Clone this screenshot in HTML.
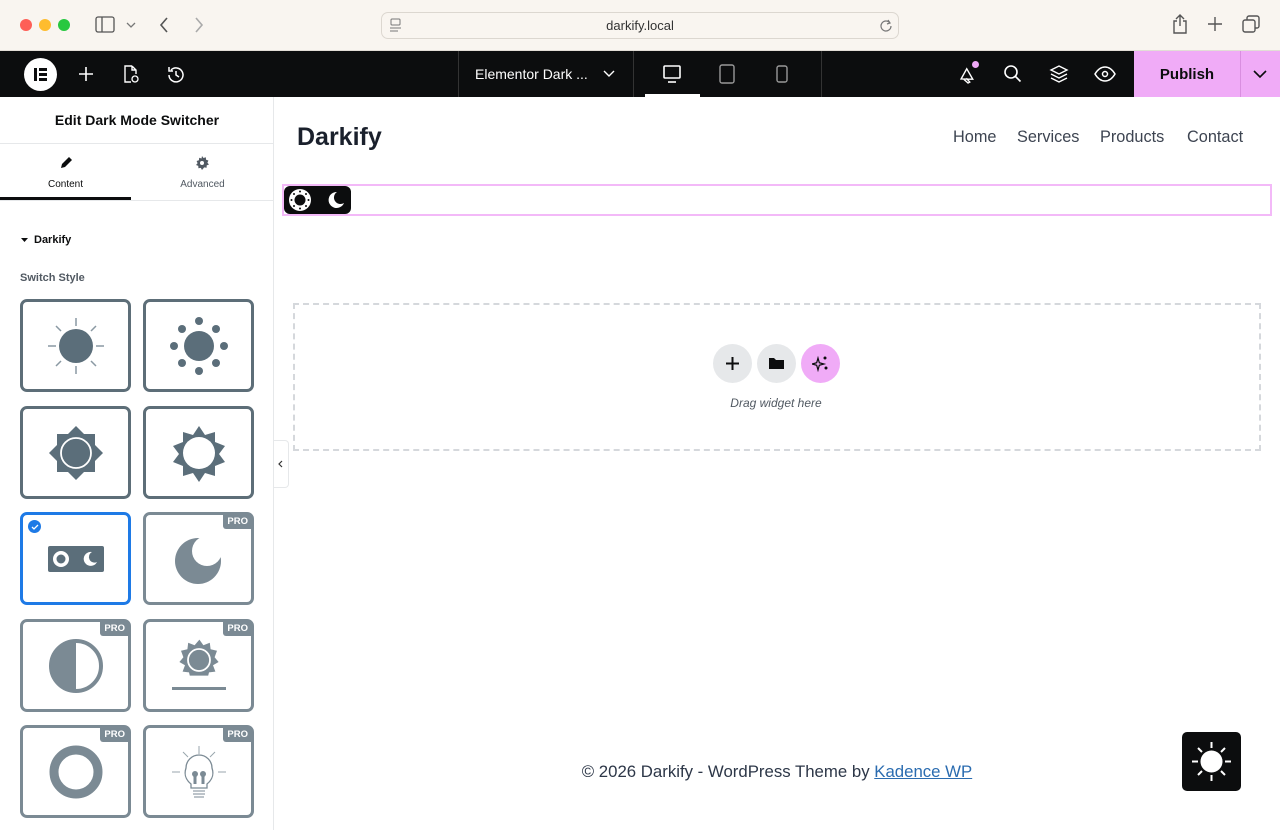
<!DOCTYPE html>
<html><head><meta charset="utf-8">
<style>
*{box-sizing:border-box;margin:0;padding:0}
body{width:1280px;height:830px;overflow:hidden;font-family:"Liberation Sans",sans-serif;background:#fff;position:relative}
.abs{position:absolute}
.chrome{left:0;top:0;width:1280px;height:51px;background:#f9f5f0;border-bottom:1px solid #e2ddd6}
.dot{width:12px;height:12px;border-radius:50%;top:19px}
.url{left:381px;top:12px;width:518px;height:27px;border:1px solid #dcd7d0;border-radius:7px;background:#f9f5f0;text-align:center;font-size:13px;line-height:26px;color:#333}
.bar{left:0;top:51px;width:1280px;height:46px;background:#0c0d0e;color:#fff}
.panel{left:0;top:97px;width:274px;height:733px;border-right:1px solid #e6e8ea;background:#fff}
.box{position:absolute;width:111px;height:93px;border:3px solid #5d6e78;border-radius:7px;background:#fff}
.box.pro{border-color:#7b8a94}
.pro b{position:absolute;right:0;top:0;background:#7b8a94;color:#fff;font-size:9.5px;font-weight:bold;padding:1px 3px 2px 4px;border-bottom-left-radius:3px}
.box svg{position:absolute;left:50%;top:50%;transform:translate(-50%,-50%)}
.nav{font-size:16.3px;color:#3d4451;top:128px}
</style></head><body>
<div class="abs chrome">
 <div class="abs dot" style="left:20px;background:#fe5f57"></div>
 <div class="abs dot" style="left:39px;background:#febc2e"></div>
 <div class="abs dot" style="left:58px;background:#28c840"></div>
 <svg class="abs" style="left:95px;top:16px" width="20" height="18" viewBox="0 0 20 18"><rect x="1" y="1" width="18" height="15" rx="2" fill="none" stroke="#555" stroke-width="1.3"/><line x1="7" y1="1" x2="7" y2="16" stroke="#555" stroke-width="1.3"/></svg>
 <svg class="abs" style="left:126px;top:21px" width="10" height="8"><path d="M1 2l4 4 4-4" fill="none" stroke="#777" stroke-width="1.3"/></svg>
 <svg class="abs" style="left:158px;top:16px" width="12" height="18"><path d="M9 2L3 9l6 7" fill="none" stroke="#555" stroke-width="1.6"/></svg>
 <svg class="abs" style="left:193px;top:16px" width="12" height="18"><path d="M3 2l6 7-6 7" fill="none" stroke="#aaa" stroke-width="1.6"/></svg>
 <div class="abs url">darkify.local</div>
 <svg class="abs" style="left:389px;top:18px" width="14" height="16"><rect x="2" y="1" width="9" height="6" rx="1" fill="none" stroke="#777"/><line x1="1" y1="10" x2="12" y2="10" stroke="#777"/><line x1="1" y1="13" x2="9" y2="13" stroke="#777"/></svg>
 <svg class="abs" style="left:879px;top:18px" width="14" height="14"><path d="M11 5A5 5 0 1 0 12 8" fill="none" stroke="#777" stroke-width="1.2"/><path d="M9 2l2 3-3 1" fill="none" stroke="#777" stroke-width="1.2"/></svg>
 <svg class="abs" style="left:1171px;top:13px" width="18" height="22"><path d="M6 8H3v12h12V8h-3M9 2v11M5 6l4-4 4 4" fill="none" stroke="#555" stroke-width="1.4"/></svg>
 <svg class="abs" style="left:1207px;top:16px" width="16" height="16"><path d="M8 1v14M1 8h14" stroke="#555" stroke-width="1.4"/></svg>
 <svg class="abs" style="left:1242px;top:15px" width="20" height="20"><rect x="1" y="5" width="12" height="12" rx="2" fill="none" stroke="#555" stroke-width="1.4"/><path d="M5 5V3a2 2 0 0 1 2-2h8a2 2 0 0 1 2 2v8a2 2 0 0 1-2 2h-2" fill="none" stroke="#555" stroke-width="1.4"/></svg>
</div>
<div class="abs bar">
 <div class="abs" style="left:24px;top:7px;width:33px;height:33px;border-radius:50%;background:#fff"></div>
 <div class="abs" style="left:34px;top:17px;width:3px;height:13px;background:#0c0d0e"></div>
 <div class="abs" style="left:39px;top:17px;width:8px;height:3px;background:#0c0d0e"></div>
 <div class="abs" style="left:39px;top:22px;width:8px;height:3px;background:#0c0d0e"></div>
 <div class="abs" style="left:39px;top:27px;width:8px;height:3px;background:#0c0d0e"></div>
 <svg class="abs" style="left:78px;top:15px" width="16" height="16"><path d="M8 1v14M1 8h14" stroke="#fff" stroke-width="1.6"/></svg>
 <svg class="abs" style="left:121px;top:13px" width="20" height="20"><path d="M11 2H4v16h6M11 2l4 4v4M11 2v4h4" fill="none" stroke="#fff" stroke-width="1.4"/><circle cx="14" cy="15" r="3" fill="none" stroke="#fff" stroke-width="1.3"/></svg>
 <svg class="abs" style="left:166px;top:14px" width="20" height="20"><path d="M3 10a7 7 0 1 0 2-5M3 2v4h4M10 6v4l3 2" fill="none" stroke="#fff" stroke-width="1.5"/></svg>
 <div class="abs" style="left:458px;top:0;width:1px;height:46px;background:#333"></div>
 <div class="abs" style="left:475px;top:15px;font-size:14px">Elementor Dark ...</div>
 <svg class="abs" style="left:603px;top:18px" width="12" height="10"><path d="M1 2l5 5 5-5" fill="none" stroke="#fff" stroke-width="1.4"/></svg>
 <div class="abs" style="left:633px;top:0;width:1px;height:46px;background:#333"></div>
 <svg class="abs" style="left:662px;top:13px" width="20" height="20"><rect x="2" y="2" width="16" height="12" rx="1" fill="none" stroke="#fff" stroke-width="1.6"/><path d="M6 18h8" stroke="#fff" stroke-width="1.6"/></svg>
 <div class="abs" style="left:645px;top:43px;width:55px;height:3px;background:#fff"></div>
 <svg class="abs" style="left:718px;top:12px" width="18" height="22"><rect x="2" y="2" width="14" height="18" rx="2" fill="none" stroke="#999" stroke-width="1.4"/></svg>
 <svg class="abs" style="left:775px;top:12px" width="14" height="22"><rect x="2" y="3" width="10" height="16" rx="2" fill="none" stroke="#999" stroke-width="1.4"/></svg>
 <div class="abs" style="left:821px;top:0;width:1px;height:46px;background:#333"></div>
 <svg class="abs" style="left:957px;top:13px" width="22" height="22"><path d="M3 11l10-6v12zM5 12l2 6h2l-1-5" fill="none" stroke="#fff" stroke-width="1.4" transform="rotate(-30 11 11)"/></svg>
 <div class="abs" style="left:972px;top:10px;width:7px;height:7px;border-radius:50%;background:#f0a8f6"></div>
 <svg class="abs" style="left:1003px;top:13px" width="20" height="20"><circle cx="8" cy="8" r="6" fill="none" stroke="#fff" stroke-width="1.6"/><path d="M12.5 12.5l5 5" stroke="#fff" stroke-width="1.6"/></svg>
 <svg class="abs" style="left:1049px;top:13px" width="20" height="20"><path d="M10 2l8 4-8 4-8-4zM2 10l8 4 8-4M2 14l8 4 8-4" fill="none" stroke="#fff" stroke-width="1.4"/></svg>
 <svg class="abs" style="left:1094px;top:13px" width="22" height="20"><path d="M1 10c3-5 6-7 10-7s7 2 10 7c-3 5-6 7-10 7s-7-2-10-7z" fill="none" stroke="#fff" stroke-width="1.5"/><circle cx="11" cy="10" r="2.5" fill="none" stroke="#fff" stroke-width="1.5"/></svg>
 <div class="abs" style="left:1134px;top:0;width:146px;height:46px;background:#f0abf7"></div>
 <div class="abs" style="left:1134px;top:15px;width:106px;text-align:center;font-weight:bold;font-size:15px;color:#0c0d0e">Publish</div>
 <div class="abs" style="left:1240px;top:0;width:1px;height:46px;background:#d98ee0"></div>
 <svg class="abs" style="left:1253px;top:18px" width="14" height="10"><path d="M1 2l6 6 6-6" fill="none" stroke="#0c0d0e" stroke-width="1.6"/></svg>
</div>
<div class="abs panel">
 <div class="abs" style="left:0;top:15px;width:274px;text-align:center;font-weight:bold;font-size:14px;color:#0c0d0e">Edit Dark Mode Switcher</div>
 <div class="abs" style="left:0;top:46px;width:274px;height:1px;background:#e6e8ea"></div>
 <svg class="abs" style="left:59px;top:59px" width="14" height="14"><path d="M2 12l1-4 7-7 3 3-7 7z" fill="#0c0d0e"/></svg>
 <div class="abs" style="left:0;top:82px;width:131px;text-align:center;font-size:10px;color:#0c0d0e">Content</div>
 <svg class="abs" style="left:195px;top:59px" width="14" height="14" viewBox="0 0 14 14"><path d="M7 0l1.5 2 2.3-.7.3 2.4 2.3.8-1 2.2 1.6 1.8-2.3.9-.1 2.4-2.4-.4L7 14l-1.2-2.1-2.4.4-.1-2.4L1 9l1.6-1.8-1-2.2 2.3-.8.3-2.4 2.3.7z" fill="#515962"/><circle cx="7" cy="7" r="2" fill="#fff"/></svg>
 <div class="abs" style="left:131px;top:82px;width:143px;text-align:center;font-size:10px;color:#515962">Advanced</div>
 <div class="abs" style="left:0;top:100px;width:131px;height:3px;background:#0c0d0e"></div>
 <div class="abs" style="left:0;top:103px;width:274px;height:1px;background:#e6e8ea"></div>
 <svg class="abs" style="left:21px;top:141px" width="7" height="5"><path d="M0 0h7L3.5 4z" fill="#0c0d0e"/></svg>
 <div class="abs" style="left:34px;top:137px;font-size:11px;font-weight:bold;color:#0c0d0e">Darkify</div>
 <div class="abs" style="left:20px;top:175px;font-size:11px;font-weight:bold;color:#515962">Switch Style</div>
</div>
<!-- boxes -->
<div class="box" style="left:20px;top:299px"><svg width="60" height="60" viewBox="0 0 60 60"><circle cx="30" cy="30" r="17" fill="#5b6e7a"/><g stroke="#8a99a3" stroke-width="1.5"><path d="M30 2v8M30 50v8M2 30h8M50 30h8M10 10l5 5M45 45l5 5M50 10l-5 5M10 50l5-5"/></g></svg></div>
<div class="box" style="left:143px;top:299px"><svg width="60" height="60" viewBox="0 0 60 60" fill="#5b6e7a"><circle cx="30" cy="30" r="15"/><circle cx="30" cy="5" r="4"/><circle cx="30" cy="55" r="4"/><circle cx="5" cy="30" r="4"/><circle cx="55" cy="30" r="4"/><circle cx="13" cy="13" r="4"/><circle cx="47" cy="13" r="4"/><circle cx="13" cy="47" r="4"/><circle cx="47" cy="47" r="4"/></svg></div>
<div class="box" style="left:20px;top:406px"><svg width="60" height="60" viewBox="0 0 60 60"><path d="M30 3l8 8h11v11l8 8-8 8v11H38l-8 8-8-8H11V38l-8-8 8-8V11h11z" fill="#5b6e7a"/><circle cx="30" cy="30" r="15" fill="#5b6e7a" stroke="#fff" stroke-width="1.8"/></svg></div>
<div class="box" style="left:143px;top:406px"><svg width="60" height="60" viewBox="0 0 60 60"><path d="M30 3l6 9 10-3 0 10 10 4-6 8 6 8-10 4 0 10-10-3-6 9-6-9-10 3 0-10-10-4 6-8-6-8 10-4 0-10 10 3z" fill="#5b6e7a"/><circle cx="30" cy="30" r="16" fill="#fff"/></svg></div>
<div class="box" style="left:20px;top:512px;border-color:#1e7ae6"><div class="abs" style="left:5px;top:5px;width:13px;height:13px;border-radius:50%;background:#1e7ae6"></div><svg class="abs" style="left:8px;top:9px;transform:none" width="8" height="6"><path d="M1 3l2 2 4-4" fill="none" stroke="#fff" stroke-width="1.3"/></svg><svg width="56" height="26" viewBox="0 0 56 26"><rect width="56" height="26" rx="2" fill="#5b6e7a"/><circle cx="13" cy="13" r="8" fill="#fff"/><circle cx="13" cy="13" r="4.5" fill="#5b6e7a"/><path d="M44 6a7 7 0 1 0 5 10 5.5 5.5 0 0 1-5-10z" fill="#fff"/></svg></div>
<div class="box pro" style="left:143px;top:512px"><b>PRO</b><svg width="50" height="50" viewBox="0 0 50 50"><defs><mask id="mm"><rect width="50" height="50" fill="#fff"/><circle cx="33" cy="17" r="15" fill="#000"/></mask></defs><circle cx="24" cy="27" r="23" fill="#7b8a94" mask="url(#mm)"/></svg></div>
<div class="box pro" style="left:20px;top:619px"><b>PRO</b><svg width="56" height="56" viewBox="0 0 56 56"><circle cx="28" cy="28" r="25" fill="#fff" stroke="#7b8a94" stroke-width="4"/><path d="M28 3a25 25 0 0 0 0 50z" fill="#7b8a94"/></svg></div>
<div class="box pro" style="left:143px;top:619px"><b>PRO</b><svg width="56" height="56" viewBox="0 0 56 56"><path d="M28 2l5 7 8-3 1 8 8 2-3 8 5 6-7 4 3 8-8 1-1 4H16l-1-4-8-1 3-8-7-4 5-6-3-8 8-2 1-8 8 3z" fill="#7b8a94" transform="translate(6,0) scale(0.8)"/><circle cx="28" cy="22" r="11" fill="#7b8a94" stroke="#fff" stroke-width="1.8"/><rect x="1" y="49" width="54" height="3" fill="#7b8a94"/></svg></div>
<div class="box pro" style="left:20px;top:725px"><b>PRO</b><svg width="56" height="56" viewBox="0 0 56 56"><circle cx="28" cy="28" r="22" fill="none" stroke="#7b8a94" stroke-width="9"/></svg></div>
<div class="box pro" style="left:143px;top:725px"><b>PRO</b><svg width="56" height="56" viewBox="0 0 56 56" stroke="#9aa6ae" fill="none"><path d="M28 2v8M12 8l5 5M44 8l-5 5M1 28h8M47 28h8"/><path d="M20 40c-6-5-7-10-5-16a13 13 0 0 1 26 0c2 6 1 11-5 16v4H20z" stroke="#7b8a94" stroke-width="1.3"/><path d="M22 47h12M22 50h12M23 53h10" stroke="#7b8a94"/><path d="M24 40V31M32 40V31" stroke="#7b8a94" stroke-width="3"/><circle cx="24" cy="30" r="3" fill="#7b8a94" stroke="none"/><circle cx="32" cy="30" r="3" fill="#7b8a94" stroke="none"/></svg></div>
<!-- canvas -->
<div class="abs" style="left:274px;top:440px;width:15px;height:48px;background:#fff;border:1px solid #e6e8ea;border-left:none;border-radius:0 4px 4px 0"></div>
<svg class="abs" style="left:277px;top:460px" width="6" height="8"><path d="M5 1L2 4l3 3" fill="none" stroke="#333" stroke-width="1.2"/></svg>
<div class="abs" style="left:297px;top:123px;font-size:25px;font-weight:bold;color:#1a202c">Darkify</div>
<div class="abs nav" style="left:953px">Home</div>
<div class="abs nav" style="left:1017px">Services</div>
<div class="abs nav" style="left:1100px">Products</div>
<div class="abs nav" style="left:1187px">Contact</div>
<div class="abs" style="left:282px;top:184px;width:990px;height:32px;border:2px solid #f3b9f8"></div>
<div class="abs" style="left:284px;top:186px;width:67px;height:28px;background:#0c0d0e;border-radius:6px"></div>
<svg class="abs" style="left:288px;top:188px" width="24" height="24" viewBox="0 0 24 24"><circle cx="12" cy="12" r="11" fill="#fff"/><circle cx="12" cy="12" r="5.5" fill="#0c0d0e"/><g fill="#0c0d0e"><circle cx="12" cy="3.5" r="1"/><circle cx="12" cy="20.5" r="1"/><circle cx="3.5" cy="12" r="1"/><circle cx="20.5" cy="12" r="1"/><circle cx="6" cy="6" r="1"/><circle cx="18" cy="6" r="1"/><circle cx="6" cy="18" r="1"/><circle cx="18" cy="18" r="1"/></g></svg>
<svg class="abs" style="left:326px;top:190px" width="20" height="20" viewBox="0 0 20 20"><path d="M11 2a8 8 0 1 0 7 11A6 6 0 0 1 11 2z" fill="#fff"/></svg>
<div class="abs" style="left:293px;top:303px;width:968px;height:148px;border:2px dashed #d5d8dc"></div>
<div class="abs" style="left:713px;top:344px;width:39px;height:39px;border-radius:50%;background:#e6e8ea"></div>
<svg class="abs" style="left:726px;top:357px" width="13" height="13"><path d="M6.5 0v13M0 6.5h13" stroke="#0c0d0e" stroke-width="2"/></svg>
<div class="abs" style="left:757px;top:344px;width:39px;height:39px;border-radius:50%;background:#e6e8ea"></div>
<svg class="abs" style="left:769px;top:357px" width="15" height="12"><path d="M0 1h5l2 2h8v9H0z" fill="#0c0d0e"/></svg>
<div class="abs" style="left:801px;top:344px;width:39px;height:39px;border-radius:50%;background:#f0abf7"></div>
<svg class="abs" style="left:812px;top:355px" width="17" height="17" viewBox="0 0 17 17" fill="#0c0d0e"><path d="M6 3l1.3 4.7L12 9l-4.7 1.3L6 15l-1.3-4.7L0 9l4.7-1.3z" fill="none" stroke="#0c0d0e" stroke-width="1.2"/><circle cx="13" cy="3" r="1.5"/><circle cx="14" cy="13" r="1.5"/></svg>
<div class="abs" style="left:0;top:396px;width:1552px;text-align:center;font-size:12px;font-style:italic;color:#515962">Drag widget here</div>
<div class="abs" style="left:0;top:762px;width:1554px;text-align:center;font-size:16.8px;color:#2d3748">© 2026 Darkify - WordPress Theme by <span style="color:#2b6cb0;text-decoration:underline">Kadence WP</span></div>
<div class="abs" style="left:1182px;top:732px;width:59px;height:59px;background:#0c0d0e;border-radius:5px"></div>
<svg class="abs" style="left:1191px;top:741px" width="41" height="41" viewBox="0 0 41 41"><circle cx="20.5" cy="20.5" r="11" fill="#fff"/><g stroke="#fff" stroke-width="2"><path d="M20.5 1v6M20.5 34v6M1 20.5h6M34 20.5h6M7 7l4 4M30 30l4 4M34 7l-4 4M7 34l4-4"/></g></svg>
</body></html>
